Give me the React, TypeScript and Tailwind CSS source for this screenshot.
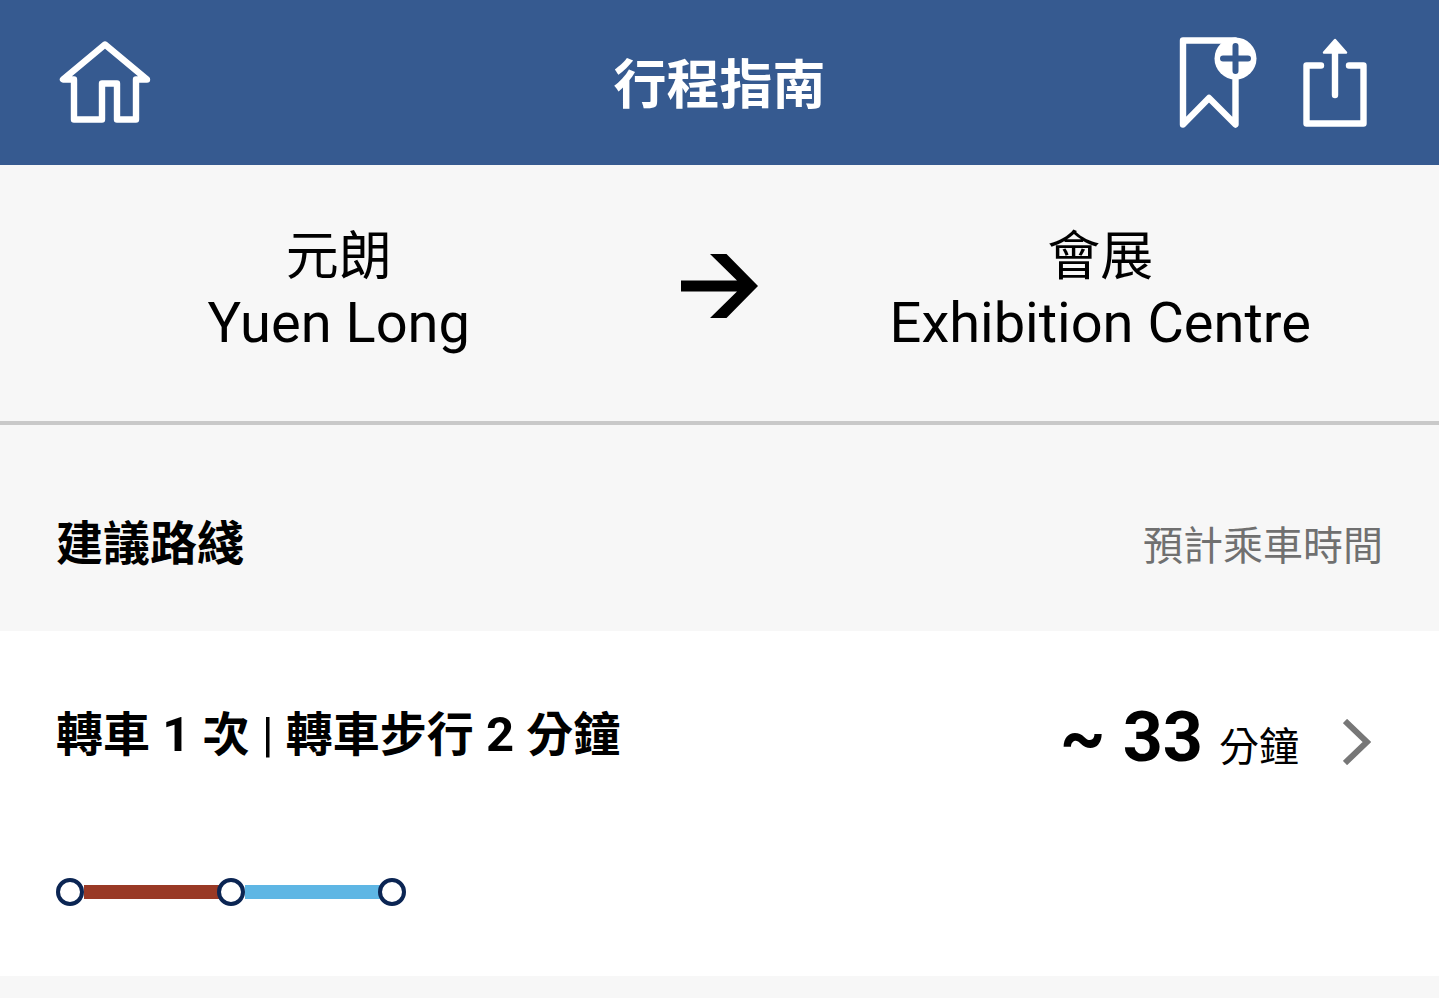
import { Fragment } from "react";

type Segment = { line: string; color: string };

const segments: Segment[] = [
  { line: "屯馬綫", color: "bg-[#993925]" },
  { line: "東鐵綫", color: "bg-[#5eb6e4]" },
];

function HomeIcon() {
  return (
    <svg width="92" height="84" viewBox="0 0 92 84" fill="none" stroke="white" strokeWidth="6.4" strokeLinejoin="round" aria-hidden="true">
      <path d="M46 3.5 4 38.5H15V78.500H43V42.500H58V78.500H77V38.500H88Z" />
    </svg>
  );
}

function BookmarkAddIcon() {
  return (
    <svg width="78" height="92" viewBox="0 0 78 92" fill="none" strokeLinecap="round" strokeLinejoin="round" aria-hidden="true">
      <path d="M56 3.500H4V87.500L30 61L56.500 87.500V40" stroke="white" strokeWidth="6.4" />
      <circle cx="56.500" cy="21.500" r="21" fill="white" />
      <path d="M56.500 9V34M44 21.500H69" stroke="#365a90" strokeWidth="6" />
    </svg>
  );
}

function ShareIcon() {
  return (
    <svg width="64" height="90" viewBox="0 0 64 90" fill="none" stroke="white" strokeLinecap="round" strokeLinejoin="round" aria-hidden="true">
      <path d="M18 27.500H3.500V85.500H60.500V27.500H46" strokeWidth="6.4" />
      <path d="M32 14V57" strokeWidth="6.4" />
      <path d="M32 2 43 14.500H21Z" fill="white" strokeWidth="2.5" />
    </svg>
  );
}

function Station({ zh, en }: { zh: string; en: string }) {
  return (
    <div className="text-center">
      <p className="text-[53px] leading-[72px]">{zh}</p>
      <p className="text-[56px] leading-[60px]">{en}</p>
    </div>
  );
}

function RouteLine() {
  const stop = <span className="size-7 shrink-0 rounded-full border-4 border-[#0b2553] bg-white" />;

  return (
    <div className="flex items-center">
      {stop}
      {segments.map((segment) => (
        <Fragment key={segment.line}>
          <span className={`-mr-1 h-3.5 w-[137px] ${segment.color}`} />
          {stop}
        </Fragment>
      ))}
    </div>
  );
}

export default function App() {
  return (
    <div className="min-h-screen bg-[#f7f7f7] font-[Roboto,'Noto_Sans_CJK_TC',sans-serif] text-black">
      <header className="grid h-[165px] grid-cols-[1fr_auto_1fr] items-center bg-[#365a90] px-[59px] text-white">
        <button type="button" aria-label="主頁" className="justify-self-start">
          <HomeIcon />
        </button>
        <h1 className="pt-1.5 text-[53px] leading-[68px] font-bold">行程指南</h1>
        <div className="flex items-center gap-[46px] justify-self-end pr-[13px]">
          <button type="button" aria-label="加入書籤">
            <BookmarkAddIcon />
          </button>
          <button type="button" aria-label="分享">
            <ShareIcon />
          </button>
        </div>
      </header>

      <section className="grid grid-cols-[1fr_84px_1fr] items-center border-b-4 border-[#c9c9c9] pt-14 pb-17">
        <Station zh="元朗" en="Yuen Long" />
        <svg width="78" height="64" viewBox="0 0 78 64" className="justify-self-center overflow-visible" aria-hidden="true">
          <path d="M0 25.500H56L29 -1H45.500L77 31L45.500 63H29L56 36.500H0Z" fill="black" />
        </svg>
        <Station zh="會展" en="Exhibition Centre" />
      </section>

      <main>
        <div className="flex h-[206px] items-baseline justify-between px-14 pt-[89px]">
          <h2 className="text-[47px] leading-[60px] font-bold">建議路綫</h2>
          <p className="text-[40px] leading-[60px] text-[#707070]">預計乘車時間</p>
        </div>

        <a href="#route" className="block bg-white px-14 pt-16 pb-[70px]">
          <div className="flex items-start justify-between">
            <h3 className="text-[49px] leading-[80px] font-bold">
              <span className="text-[47px]">轉車</span> 1 <span className="text-[47px]">次</span>{" "}
              <span className="font-normal">|</span> <span className="text-[47px]">轉車步行</span> 2{" "}
              <span className="text-[47px]">分鐘</span>
            </h3>
            <div className="flex items-center gap-11 pt-0.5 pr-3">
              <p className="flex items-baseline gap-4 pb-2">
                <span className="text-[70px] leading-[80px] font-bold">~ 33</span>
                <span className="text-[40px] leading-[60px]">分鐘</span>
              </p>
              <svg width="28" height="46" viewBox="0 0 28 46" fill="none" stroke="#777" strokeWidth="6" aria-hidden="true">
                <path d="M2 2 24 23 2 44" />
              </svg>
            </div>
          </div>
          <div className="pt-[92px]">
            <RouteLine />
          </div>
        </a>
      </main>
    </div>
  );
}
